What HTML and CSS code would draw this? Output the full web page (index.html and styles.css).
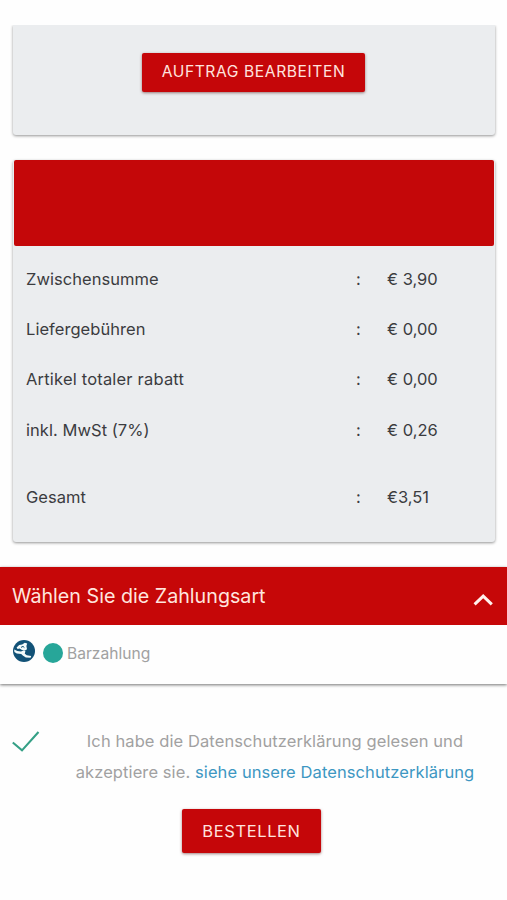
FILE: index.html
```html
<!DOCTYPE html>
<html lang="de">
<head>
<meta charset="utf-8">
<title>Bestellung</title>
<link rel="stylesheet" href="styles.css">
</head>
<body>
<main class="page">
  <section class="card edit-card">
    <button class="btn btn-edit">AUFTRAG BEARBEITEN</button>
  </section>
  <section class="card summary">
    <div class="summary-head"></div>
    <dl class="rows">
      <div class="row"><dt>Zwischensumme</dt><dd>:</dd><dd>€ 3,90</dd></div>
      <div class="row"><dt>Liefergebühren</dt><dd>:</dd><dd>€ 0,00</dd></div>
      <div class="row"><dt class="wide">Artikel totaler rabatt</dt><dd>:</dd><dd>€ 0,00</dd></div>
      <div class="row"><dt>inkl. MwSt (7%)</dt><dd>:</dd><dd>€ 0,26</dd></div>
      <div class="row total"><dt>Gesamt</dt><dd>:</dd><dd>€3,51</dd></div>
    </dl>
  </section>
  <section class="payment">
    <header class="payment-head">
      <h2>Wählen Sie die Zahlungsart</h2>
      <svg class="chevron" width="20" height="14" viewBox="0 0 20 14"><path d="M1.6 11.4 10.2 3.1l8.6 8.3" fill="none" stroke="#fff0ec" stroke-width="3"/></svg>
    </header>
    <div class="method">
      <svg class="cash" width="22" height="22" viewBox="0 0 22 22">
        <circle cx="11" cy="11" r="11" fill="#125277"/>
        <path d="M3.6 7.6 6.2 5l3-.6 2.6-1.6 2.4.6-.8 2.6.6 3.2-2 1.4-3-.6-2.4-1.6-2 .6Z" fill="#f4fbfb"/>
        <path d="M1.2 9.6 4.4 11l3.6.6 3-1.4 1.4 1-.6 2.6 2 1.4 4.4.8-.6 1.8-4.8-.4-3-1.8-1.6-1.6-4.4-.6-2.4-1.4Z" fill="#f4fbfb"/>
        <path d="m8 7.4 2-1 1.4 1.2" fill="none" stroke="#125277" stroke-width="1"/>
      </svg>
      <span class="dot"></span>
      <span class="method-name">Barzahlung</span>
    </div>
  </section>
  <section class="consent">
    <svg class="check" width="28" height="22" viewBox="0 0 28 22"><path d="M.8 11.5 10 19.4 26.5 1" fill="none" stroke="#35a086" stroke-width="2.1"/></svg>
    <p>Ich habe die Datenschutzerklärung gelesen und<br>akzeptiere sie. <a>siehe unsere Datenschutzerklärung</a></p>
  </section>
  <button class="btn btn-order">BESTELLEN</button>
</main>
</body>
</html>
```
FILE: styles.css
```css
* { box-sizing: border-box; }

body {
  margin: 0;
  background: #fefefe;
  font: 16.5px/24px Inter, "Liberation Sans", sans-serif;
  color: #3b3c3f;
}

.page {
  display: flex;
  flex-direction: column;
  height: 900px;
  padding-top: 25px;
  overflow: hidden;
}

.card {
  margin: 0 12px 0 13px;
  background: #ebedef;
  border-radius: 3px;
  box-shadow: 0 1px 3px rgba(0, 0, 0, .42);
}

.edit-card {
  height: 110px;
  padding-top: 28px;
  border-radius: 0 0 3px 3px;
  text-align: center;
  clip-path: inset(0 -4px -5px);
}

.btn {
  border: 0;
  padding: 0;
  background: #c50609;
  border-radius: 2px;
  box-shadow: 0 1px 3px rgba(70, 0, 0, .5);
  color: #ffe3df;
  font: 15.6px/24px Inter, "Liberation Sans", sans-serif;
  white-space: nowrap;
}

.btn-edit {
  width: 223px;
  height: 39px;
  margin-left: -1px;
  padding-bottom: 1px;
  letter-spacing: .6px;
}

.summary {
  height: 382px;
  margin-top: 25px;
}

.summary-head {
  height: 86px;
  margin: 0 1px;
  background: #c40709;
  border-radius: 2px;
}

.rows { margin: 8px 0 0; }

.row {
  display: grid;
  grid-template-columns: 330px 31px 1fr;
  align-items: center;
  height: 50.2px;
  padding-left: 13px;
}

.row dt, .row dd { margin: 0; }
.row dt { letter-spacing: .05px; }
.row .wide { letter-spacing: .19px; }
.total { margin-top: 17px; }

.payment {
  height: 117px;
  margin-top: 25px;
  background: #fefefe;
  box-shadow: 0 1px 3px rgba(0, 0, 0, .55);
}

.payment-head {
  display: flex;
  justify-content: space-between;
  height: 58px;
  padding: 15px 14px 0 12px;
  background: #c60708;
  color: #ffe5df;
}

.payment-head h2 {
  margin: 0;
  font-size: 19.7px;
  font-weight: 400;
  line-height: 28px;
}

.chevron { margin-top: 11px; }

.method {
  display: flex;
  padding: 15px 13px;
}

.cash { margin-right: 8px; }

.dot {
  width: 20px;
  height: 20px;
  margin: 3px 4px 0 0;
  border-radius: 50%;
  background: #27a699;
}

.method-name {
  margin-top: 2px;
  color: #a1a1a1;
  font-size: 15.6px;
}

.consent {
  display: flex;
  margin-top: 42px;
  padding-left: 12px;
}

.check { margin-top: 5px; }

.consent p {
  width: 400px;
  margin: 0 0 0 35px;
  color: #a1a1a1;
  letter-spacing: .09px;
  line-height: 31px;
  text-align: center;
  white-space: nowrap;
}

.consent a { color: #3d97c2; }

.btn-order {
  align-self: center;
  width: 139px;
  height: 44px;
  margin: 21px 4px 0 0;
  font-size: 16.5px;
  letter-spacing: .6px;
}
```
